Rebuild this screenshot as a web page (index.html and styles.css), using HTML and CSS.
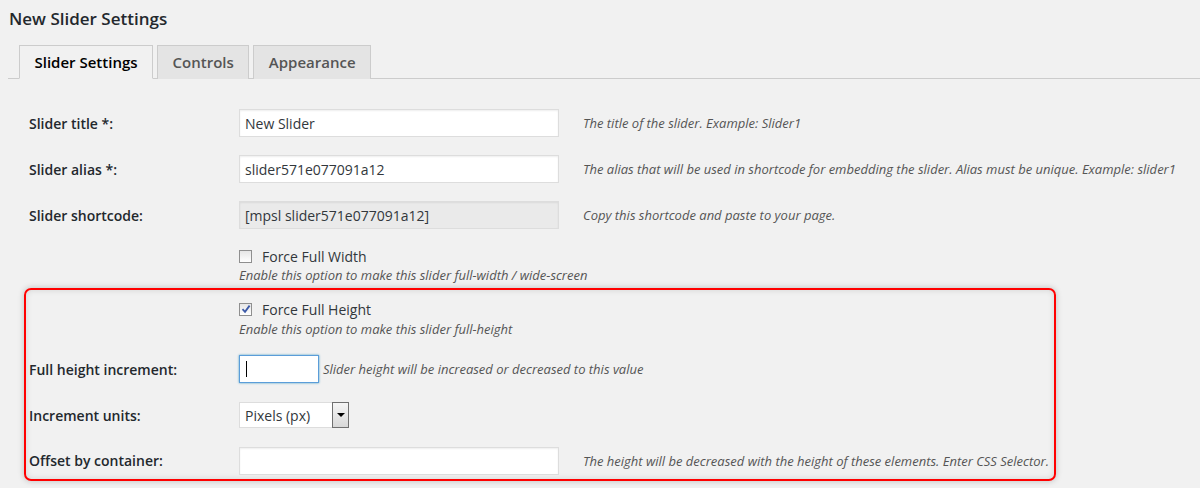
FILE: index.html
```html
<!DOCTYPE html>
<html>
<head>
<meta charset="utf-8">
<link rel="stylesheet" href="styles.css">
</head>
<body>
<div class="wrap">
  <h2 class="title">New Slider Settings</h2>
  <div class="tabs">
    <span class="tab active">Slider Settings</span>
    <span class="tab">Controls</span>
    <span class="tab">Appearance</span>
  </div>
  <div class="content">
    <div class="row">
      <div class="label">Slider title *:</div>
      <input class="field" type="text" value="New Slider">
      <div class="desc">The title of the slider. Example: Slider1</div>
    </div>
    <div class="row">
      <div class="label">Slider alias *:</div>
      <input class="field" type="text" value="slider571e077091a12">
      <div class="desc">The alias that will be used in shortcode for embedding the slider. Alias must be unique. Example: slider1</div>
    </div>
    <div class="row">
      <div class="label">Slider shortcode:</div>
      <input class="field readonly" type="text" value="[mpsl slider571e077091a12]" readonly>
      <div class="desc">Copy this shortcode and paste to your page.</div>
    </div>
    <div class="check-row first">
      <div class="check-line"><span class="cb"></span><span class="cb-label">Force Full Width</span></div>
      <div class="check-desc">Enable this option to make this slider full-width / wide-screen</div>
    </div>
    <div class="box">
      <div class="check-row">
        <div class="check-line"><span class="cb"><svg width="10" height="10" viewBox="0 0 10 10"><path d="M1.5 5.2 L4 7.8 L8.6 1.6" fill="none" stroke="#3c5aa8" stroke-width="1.8"/></svg></span><span class="cb-label">Force Full Height</span></div>
        <div class="check-desc">Enable this option to make this slider full-height</div>
      </div>
      <div class="row">
        <div class="label">Full height increment:</div>
        <div class="field small focus"><span class="caret"></span></div>
        <div class="desc tight">Slider height will be increased or decreased to this value</div>
      </div>
      <div class="row">
        <div class="label">Increment units:</div>
        <div class="select"><span class="select-text">Pixels (px)</span><span class="select-btn"><span class="tri"></span></span></div>
      </div>
      <div class="row last">
        <div class="label">Offset by container:</div>
        <input class="field" type="text" value="">
        <div class="desc">The height will be decreased with the height of these elements. Enter CSS Selector.</div>
      </div>
    </div>
  </div>
</div>
</body>
</html>
```

FILE: styles.css
```css
* { box-sizing: border-box; }
html, body { margin: 0; padding: 0; }
body {
  background: #f1f1f1;
  font-family: "Open Sans", "Liberation Sans", sans-serif;
  color: #23282d;
  width: 1200px;
  height: 488px;
  overflow: hidden;
}
.wrap { padding-top: 6px; }
.title {
  margin: 0 0 0 9px;
  font-size: 17px;
  font-weight: 600;
  line-height: 26px;
  color: #23282d;
}
.tabs {
  margin: 13px 0 0 8px;
  padding-left: 11px;
  border-bottom: 1px solid #ccc;
  display: flex;
  gap: 4px;
  height: 34px;
  align-items: flex-end;
}
.tab {
  display: block;
  height: 34px;
  padding: 4px 14.5px 0;
  font-size: 15px;
  font-weight: 600;
  line-height: 24px;
  color: #555;
  background: #e4e4e4;
  border: 1px solid #ccc;
  border-bottom: none;
  margin-bottom: -1px;
}
.tab.active {
  background: #f1f1f1;
  color: #000;
  border-bottom: 1px solid #f1f1f1;
}
.content { padding: 21px 0 0 24px; }
.row {
  display: flex;
  align-items: center;
  height: 46px;
  padding-left: 5px;
}
.label {
  width: 210px;
  flex: none;
  font-size: 14px;
  font-weight: 600;
  color: #23282d;
}
.field {
  width: 320px;
  height: 28px;
  flex: none;
  margin: 0;
  padding: 0 5px;
  font-family: "Open Sans", "Liberation Sans", sans-serif;
  font-size: 14px;
  color: #32373c;
  background: #fff;
  border: 1px solid #ddd;
  box-shadow: inset 0 1px 2px rgba(0,0,0,0.07);
  outline: none;
}
.field.readonly { background: #eaeaea; }
.field.small {
  width: 80px;
  position: relative;
}
.field.focus {
  border-color: #5b9dd9;
  box-shadow: 0 0 2px rgba(30,140,190,0.8);
}
.caret {
  position: absolute;
  left: 6px;
  top: 5px;
  width: 1px;
  height: 16px;
  background: #000;
}
.desc {
  margin-left: 24px;
  font-size: 13px;
  font-style: italic;
  color: #555;
  white-space: nowrap;
}
.desc.tight { margin-left: 4px; }
.check-row { padding-left: 215px; }
.check-row.first { padding-top: 9px; height: 50px; }
.box .check-row { padding-left: 210px; padding-top: 10px; height: 56px; }
.check-line { display: flex; align-items: center; height: 18px; }
.cb {
  width: 13px;
  height: 13px;
  border: 1px solid #8f8f8f;
  background: linear-gradient(#e6e6e6, #fff);
  display: flex;
  align-items: center;
  justify-content: center;
  margin-right: 10px;
  flex: none;
}
.cb-label { font-size: 14px; color: #32373c; }
.check-desc {
  font-size: 13px;
  font-style: italic;
  color: #555;
  line-height: 18px;
  margin-top: 1px;
}
.box .check-desc { margin-top: 2px; }
.box {
  width: 1032px;
  border: 2px solid #ff0000;
  border-radius: 7px;
  padding-left: 3px;
  padding-bottom: 1px;
  box-shadow: 0 0 6px rgba(0,0,0,0.22), inset 0 0 6px rgba(0,0,0,0.12);
}
.box .row { padding-left: 0; }
.box .row.last {
  height: 40px;
  align-items: flex-start;
  padding-top: 9px;
}
.box .row.last .label,
.box .row.last .desc { line-height: 28px; }
.select {
  width: 110px;
  height: 26px;
  background: #fff;
  border: 1px solid #ddd;
  display: flex;
  align-items: center;
  justify-content: space-between;
}
.select-text { font-size: 14px; color: #32373c; padding-left: 5px; }
.select-btn {
  width: 17px;
  height: 26px;
  margin: -1px -1px -1px 0;
  border: 1px solid #707070;
  background: linear-gradient(#f6f6f6, #d8d8d8);
  display: flex;
  align-items: center;
  justify-content: center;
}
.tri {
  width: 0;
  height: 0;
  border-left: 4px solid transparent;
  border-right: 4px solid transparent;
  border-top: 4px solid #000;
}
```
